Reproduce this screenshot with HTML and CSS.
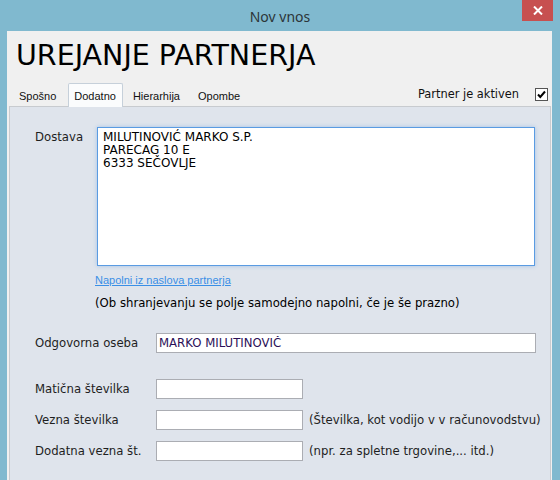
FILE: index.html
```html
<!DOCTYPE html>
<html lang="sl">
<head>
<meta charset="utf-8">
<title>Nov vnos</title>
<link rel="stylesheet" href="styles.css">
</head>
<body>
<div class="window">
  <div class="titlebar">
    <div class="title">Nov vnos</div>
    <div class="close">
      <svg width="10" height="9" viewBox="0 0 10 9"><path d="M1 0.5 L9 8.5 M9 0.5 L1 8.5" stroke="#fff" stroke-width="2" fill="none"/></svg>
    </div>
  </div>
  <div class="client">
    <h1 class="heading">UREJANJE PARTNERJA</h1>
    <div class="tabrow">
      <div class="tabs">
        <div class="tab">Spošno</div>
        <div class="tab selected">Dodatno</div>
        <div class="tab">Hierarhija</div>
        <div class="tab">Opombe</div>
      </div>
      <div class="active">
        <span class="active-label">Partner je aktiven</span>
        <span class="checkbox">
          <svg width="13" height="13" viewBox="0 0 13 13"><rect x="0.5" y="0.5" width="12" height="12" fill="#fff" stroke="#555"/><path d="M3 6.5 L5.3 9 L10 3.5" stroke="#000" stroke-width="2" fill="none"/></svg>
        </span>
      </div>
    </div>
    <div class="panel">
      <div class="row-dostava">
        <div class="label-dostava">Dostava</div>
        <textarea class="address">MILUTINOVIĆ MARKO S.P.
PARECAG 10 E
6333 SEČOVLJE</textarea>
      </div>
      <div class="link">Napolni iz naslova partnerja</div>
      <div class="note">(Ob shranjevanju se polje samodejno napolni, če je še prazno)</div>
      <div class="row row-first">
        <div class="label">Odgovorna oseba</div>
        <input class="field wide" type="text" value="MARKO MILUTINOVIČ">
      </div>
      <div class="row row-gap">
        <div class="label">Matična številka</div>
        <input class="field short" type="text" value="">
      </div>
      <div class="row">
        <div class="label">Vezna številka</div>
        <input class="field short" type="text" value="">
        <div class="hint">(Številka, kot vodijo v v računovodstvu)</div>
      </div>
      <div class="row">
        <div class="label">Dodatna vezna št.</div>
        <input class="field short" type="text" value="">
        <div class="hint">(npr. za spletne trgovine,... itd.)</div>
      </div>
    </div>
  </div>
</div>
</body>
</html>
```
FILE: styles.css
```css
html, body {
  margin: 0;
  padding: 0;
}
body {
  width: 560px;
  height: 480px;
  overflow: hidden;
  background: #80b9cf;
  font-family: "DejaVu Sans", sans-serif;
}
.window {
  height: 480px;
  display: flex;
  flex-direction: column;
}
.titlebar {
  height: 31px;
  flex: none;
  display: grid;
  grid-template-columns: 1fr auto 1fr;
  align-items: start;
}
.title {
  grid-column: 2;
  font-family: "Noto Sans", sans-serif;
  font-size: 14px;
  line-height: 33px;
  color: #2c3538;
}
.close {
  grid-column: 3;
  justify-self: end;
  width: 31px;
  height: 21px;
  margin-right: 7px;
  background: #c75050;
  display: flex;
  align-items: center;
  justify-content: center;
}
.close svg {
  display: block;
}
.client {
  flex: 1;
  margin: 0 8px 0 7px;
  background: #f0f0f0;
  display: flex;
  flex-direction: column;
  min-height: 0;
}
.heading {
  margin: 8px 0 0 9px;
  font-size: 28.5px;
  line-height: 34px;
  font-weight: normal;
  color: #000;
}
.tabrow {
  margin-top: 11px;
  height: 22px;
  display: flex;
  justify-content: space-between;
  align-items: flex-end;
}
.tabs {
  display: flex;
  align-items: flex-end;
  padding-left: 7px;
  height: 22px;
}
.tab {
  font-family: "Liberation Sans", sans-serif;
  font-size: 11px;
  color: #111;
  height: 20px;
  line-height: 20px;
  padding: 0 5px;
  margin-right: 8px;
}
.tab:first-child {
  margin-right: 7px;
}
.tab.selected {
  position: relative;
  z-index: 1;
  height: 21px;
  line-height: 21px;
  padding: 2px 6px 0 5px;
  margin: 0 5px -1px 0;
  background: #fbfcfd;
  border: 1px solid #c6d0da;
  border-bottom: none;
  border-radius: 2px 2px 0 0;
}
.active {
  display: flex;
  align-items: center;
  height: 22px;
  padding-bottom: 2px;
  box-sizing: border-box;
}
.active-label {
  font-size: 11.4px;
  color: #111;
  margin-right: 16px;
}
.checkbox {
  width: 13px;
  height: 13px;
  margin-right: 4px;
}
.checkbox svg {
  display: block;
}
.panel {
  flex: 1;
  margin: 0 1px 0 2px;
  background: #dfe4ec;
  border: 1px solid #c8cbcf;
  border-bottom: none;
  padding: 20px 0 0 25px;
  font-size: 11.7px;
  color: #1e1e1e;
}
.row-dostava {
  display: flex;
  align-items: flex-start;
}
.label-dostava {
  width: 62px;
  margin-top: 4px;
  line-height: 13px;
}
.address {
  width: 438px;
  height: 139px;
  box-sizing: border-box;
  margin: 0;
  padding: 3px 5px;
  border: 1px solid #5a9be2;
  box-shadow: 0 0 4px rgba(90, 155, 226, 0.45);
  background: #fff;
  font-family: "DejaVu Sans", sans-serif;
  font-size: 12px;
  line-height: 13px;
  color: #000;
  resize: none;
  overflow: hidden;
  outline: none;
}
.link {
  margin: 8px 0 0 60px;
  font-family: "Liberation Sans", sans-serif;
  font-size: 11px;
  line-height: 13px;
  color: #3a8fe6;
  text-decoration: underline;
}
.note {
  margin: 10px 0 0 60px;
  line-height: 13px;
  color: #000;
}
.row {
  display: flex;
  align-items: center;
  margin-top: 11px;
}
.row-first {
  margin-top: 23px;
}
.row-gap {
  margin-top: 26px;
}
.label {
  width: 121px;
  line-height: 13px;
  padding-top: 1px;
}
.field {
  height: 20px;
  box-sizing: border-box;
  margin: 0;
  padding: 0 2px;
  border: 1px solid #abadb3;
  background: #fff;
  font-family: "DejaVu Sans", sans-serif;
  font-size: 11.7px;
  color: #2b1058;
  outline: none;
}
.field.wide {
  width: 380px;
}
.field.short {
  width: 147px;
}
.hint {
  margin-left: 6px;
  line-height: 13px;
  color: #1e1e1e;
}
```
